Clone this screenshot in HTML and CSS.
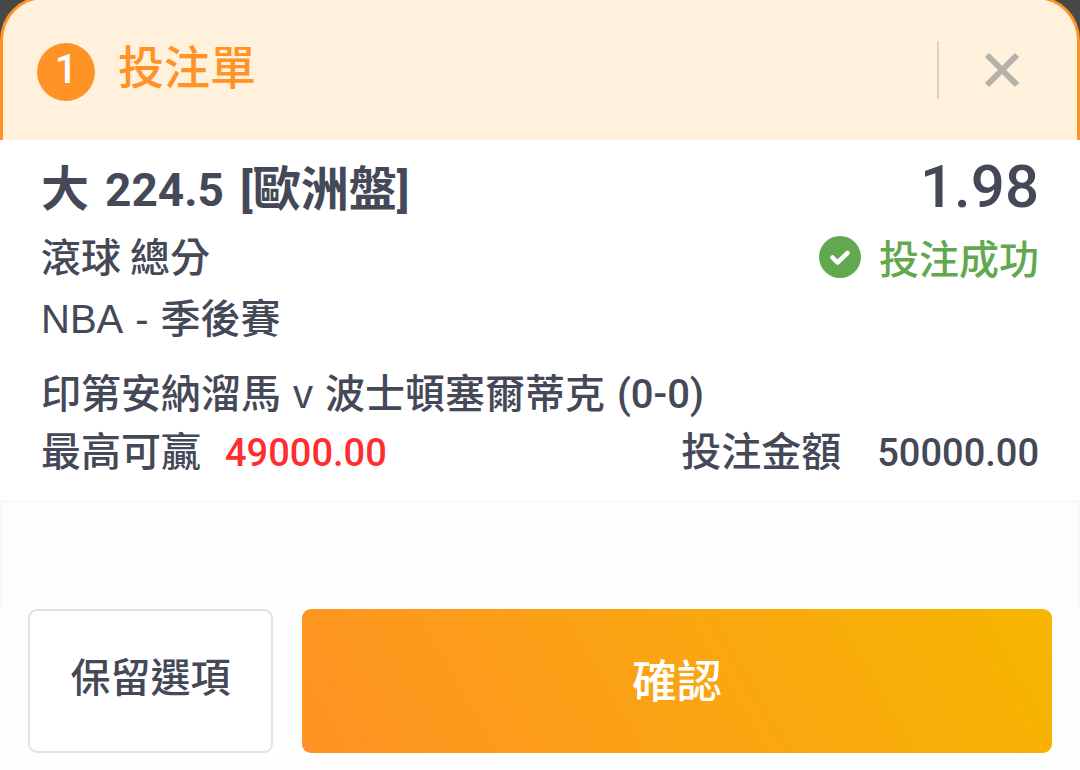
FILE: index.html
```html
<!DOCTYPE html>
<html lang="zh-Hant">
<head>
	<meta charset="utf-8" />
	<meta name="viewport" content="width=device-width, initial-scale=1" />
	<title>投注單</title>
	<link rel="stylesheet" href="styles.css">
</head>
<body>
	<div class="slip">
		<header class="slip-head">
			<span class="count">1</span>
			<h1 class="title">投注單</h1>
			<button class="close" type="button" aria-label="關閉">
				<svg viewBox="0 0 36 36" width="36" height="36" aria-hidden="true">
					<path d="M3 3L33 33M33 3L3 33" fill="none" stroke="#b5b1ab" stroke-width="6"/>
				</svg>
			</button>
		</header>

		<main class="bet">
			<div class="row pick">
				<h2 class="selection">
					<span>大</span>
					<span class="num">224.5</span>
					<span><span class="num">[</span>歐洲盤<span class="num">]</span></span>
				</h2>
				<span class="odds">1.98</span>
			</div>
			<div class="row market">
				<span>滾球 總分</span>
				<span class="status">
					<svg viewBox="0 0 42 42" width="42" height="42" aria-hidden="true">
						<circle cx="21" cy="21" r="21" fill="#62a84f"/>
						<path d="M13.500 21.500L18.500 26.500L28.500 17" fill="none" stroke="#fff" stroke-width="4.500" stroke-linecap="round" stroke-linejoin="round"/>
					</svg>
					投注成功
				</span>
			</div>
			<div class="row league">
				<span class="words">
					<span class="latin">NBA</span>
					<span class="latin">-</span>
					<span>季後賽</span>
				</span>
			</div>
			<div class="row match">
				<span class="words">
					<span>印第安納溜馬</span>
					<span class="latin">v</span>
					<span>波士頓塞爾蒂克</span>
					<span class="num">(0-0)</span>
				</span>
			</div>
			<div class="row money">
				<span class="pair">最高可贏 <span class="num win">49000.00</span></span>
				<span class="pair stake">投注金額 <span class="num">50000.00</span></span>
			</div>
		</main>

		<div class="note"></div>

		<footer class="actions">
			<button class="btn keep" type="button">保留選項</button>
			<button class="btn confirm" type="button">確認</button>
		</footer>
	</div>
</body>
</html>
```

FILE: styles.css
```css
* {
	box-sizing: border-box;
}

body {
	margin: 0;
	background: #fefefe;
	color: #444857;
	font: 500 40px/58px "Noto Sans CJK TC", sans-serif;
}

h1,
h2 {
	margin: 0;
	font-size: inherit;
	font-weight: inherit;
}

button {
	padding: 0;
	border: 0;
	background: none;
	color: inherit;
	font: inherit;
	cursor: pointer;
}

/* the dark page behind shows only round the top corners */
.slip {
	display: flow-root;
	overflow: hidden;
	background: linear-gradient(#484848 100px, #fefefe 100px);
}

/* header */

.slip-head {
	display: flex;
	align-items: center;
	height: 144px;
	margin-top: -4px;
	padding: 0 57px 0 34px;
	border: 3px solid #ff9326;
	border-bottom: 0;
	border-radius: 44px 44px 0 0;
	background: #fff1dc;
}

.count {
	width: 58px;
	height: 58px;
	margin-top: 4px;
	border-radius: 50%;
	background: #ff9326;
	color: #fff;
	font: 500 40px/54px Roboto, sans-serif;
	text-align: center;
}

.title {
	margin-left: 23px;
	padding-bottom: 12px;
	color: #ff9326;
	font-size: 46px;
}

.close {
	display: flex;
	align-items: center;
	height: 58px;
	margin-left: auto;
	padding-left: 45px;
	border-left: 2px solid #ddd3c3;
}

/* bet */

.bet {
	padding: 18px 41px 20px;
	background: #fff;
}

.row {
	display: flex;
	align-items: center;
	justify-content: space-between;
	height: 58px;
	white-space: nowrap;
}

.num {
	font-family: Roboto, sans-serif;
}

.latin {
	font-family: "Liberation Sans", sans-serif;
	font-weight: 400;
}

.selection,
.words,
.pair {
	display: flex;
	align-items: baseline;
}

.selection {
	gap: 16px;
	font-size: 48px;
	font-weight: 700;
}

.selection .num {
	font-size: 46px;
}

.odds {
	font: 500 60px/58px Roboto, sans-serif;
}

.market {
	margin-top: 10px;
}

.status {
	display: flex;
	align-items: center;
	gap: 18px;
	padding-top: 4px;
	color: #62a84f;
}

.league {
	margin-top: 4px;
}

.words {
	gap: 12px;
}

.match {
	margin-top: 18px;
}

.pair {
	gap: 24px;
}

.pair .num {
	font-size: 38px;
}

.stake {
	gap: 36px;
}

.win {
	color: #ff2d2f;
}

.note {
	height: 109px;
	border: 3px solid #f9f9f9;
	border-bottom: 0;
	background: #fefefe;
}

/* actions */

.actions {
	display: grid;
	grid-template-columns: 245fr 750fr;
	gap: 29px;
	padding: 0 28px 17px;
	background: #fefefe;
}

.btn {
	height: 144px;
	border-radius: 9px;
}

.keep {
	padding-bottom: 12px;
	border: 2px solid #e2e2e2;
	background: #fff;
}

.confirm {
	padding-bottom: 4px;
	background: linear-gradient(60deg, #ff9224, #f6b600);
	color: #fff;
	font-size: 45px;
}
```
